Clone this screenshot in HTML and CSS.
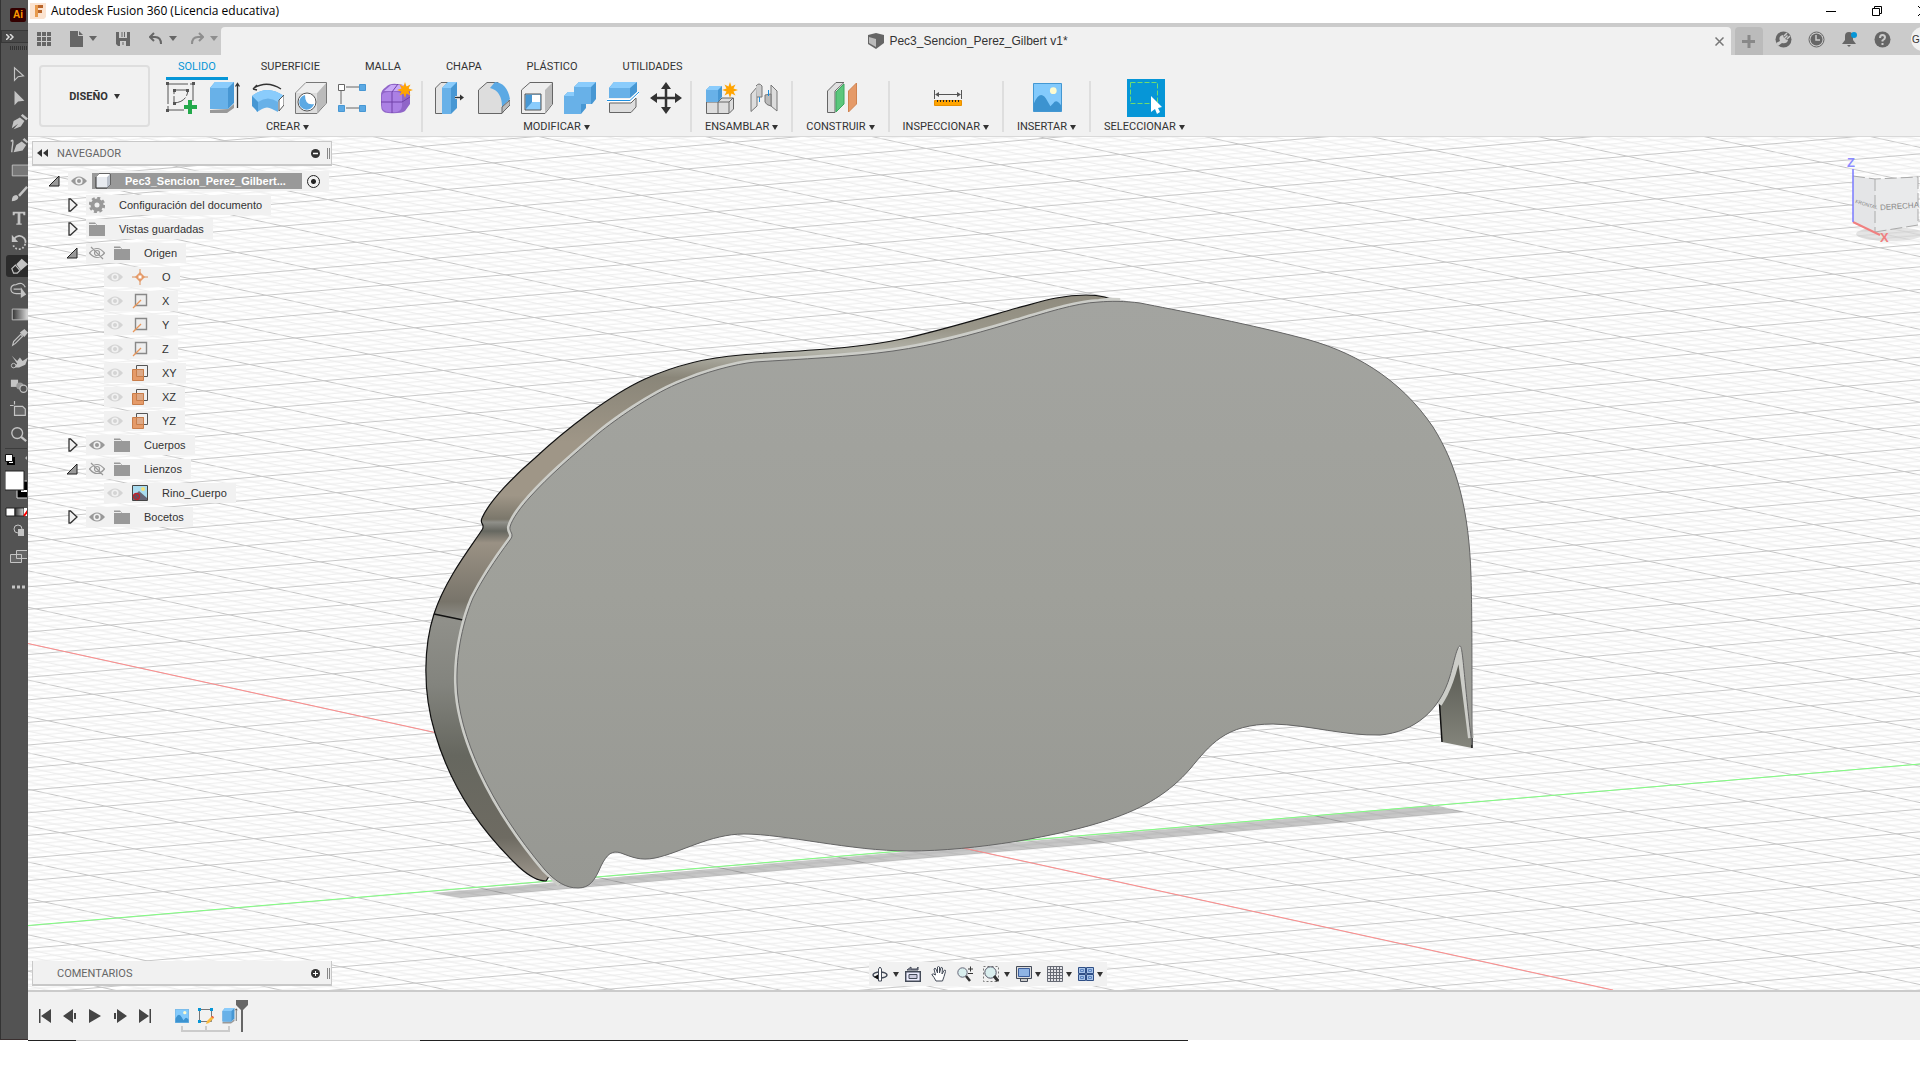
FILE: index.html
```
<!DOCTYPE html>
<html lang="es">

<head>
    <meta charset="UTF-8">
    <meta name="viewport" content="width=device-width, initial-scale=1.0">
    <title>Autodesk Fusion 360 (Licencia educativa)</title>
    <link rel="stylesheet" href="styles.css">
</head>

<body>
    <!-- Shared icons -->
    <svg class="defs" aria-hidden="true">
        <symbol id="eye" viewBox="0 0 16 16">
            <path d="M0 8Q8-1 16 8Q8 17 0 8Z" fill="currentColor" />
            <circle cx="8" cy="8" r="3.6" fill="#f1f1f1" />
            <circle cx="8" cy="8" r="2" fill="currentColor" />
        </symbol>
        <symbol id="eye-off" viewBox="0 0 16 16">
            <path d="M.5 8Q8-1 15.500 8Q8 17 .5 8ZM2 2L14 14" fill="none" stroke="currentColor" stroke-width="1.200" />
            <circle cx="8" cy="8" r="2.500" fill="none" stroke="currentColor" stroke-width="1.200" />
        </symbol>
        <symbol id="folder" viewBox="0 0 16 16">
            <path d="M0 1.500H6L8 4H16V15H0Z" fill="#999" />
            <path d="M0 3.500H7" stroke="#eee" />
        </symbol>
        <symbol id="closed" viewBox="0 0 12 16">
            <path d="M3 2H4.500L11 8L4.500 14H3Z" fill="#f1f1f1" stroke="#333" stroke-width="1.300" />
        </symbol>
        <symbol id="open" viewBox="0 0 12 16">
            <path d="M1 13L11 3V13Z" fill="#999" stroke="#222" />
        </symbol>
        <symbol id="axis" viewBox="0 0 16 16">
            <path d="M3.500 1.500H14.500V12.500H3.500Z" fill="#eee" stroke="#888" stroke-width="1.400" />
            <path d="M1 15L9 7" stroke="#e8965a" stroke-width="1.300" />
        </symbol>
        <symbol id="plane" viewBox="0 0 16 16">
            <path d="M4.500 .5H15.500V11.500H12M4.500 .5V5" fill="none" stroke="#555" />
            <path d="M.5 4.500H11.500V15.500H.5Z" fill="#e59a68" stroke="#c87d4a" />
            <path d="M4.500 4.500H11.500V11.500H4.500Z" fill="#dda987" stroke="#c87d4a" />
        </symbol>
        <symbol id="picture" viewBox="0 0 30 30">
            <path d="M.5 .5H29.500V29.500H.5Z" fill="#83cafc" stroke="#3c93d0" />
            <path d="M1 21Q8 5 15 19L18 24L21 21Q24 16 29 23V29H1Z" fill="#3c93d0" />
            <circle cx="21" cy="8" r="3.500" fill="#fdfbd0" />
        </symbol>
        <symbol id="extrude" viewBox="0 0 32 32">
            <path d="M1 28V31H18L25 26V22L19 27Z" fill="#999" />
            <path d="M1 6L6 0H25V21L19 27H1Z" fill="#4797d3" />
            <path d="M1 6H19V27H1Z" fill="#68b1e8" />
            <path d="M1 6L6 0H25L19 6Z" fill="#8accfc" />
            <path d="M28.500 26V2M26.500 4.500L28.500 1.500L30.500 4.500" fill="none" stroke="#333" stroke-width="1.300" />
        </symbol>
        <symbol id="star" viewBox="0 0 16 16">
            <path d="M8 0L9.500 4.500L13.500 2.500L11.500 6.500L16 8L11.500 9.500L13.500 13.500L9.500 11.500L8 16L6.500 11.500L2.500 13.500L4.500 9.500L0 8L4.500 6.500L2.500 2.500L6.500 4.500Z" fill="#ffa400" />
        </symbol>
    </svg>

    <div class="desktop">
        <!-- Illustrator tool strip behind the window -->
        <aside class="ai-strip">
            <div class="ai-title"><span class="ai-logo">Ai</span></div>
            <div class="ai-expand">
                <svg width="8" height="6" viewBox="0 0 8 6"><path d="M0 0L3 3L0 6M4 0L7 3L4 6" fill="none" stroke="#ddd" stroke-width="1.500" /></svg>
            </div>
            <div class="ai-grip"></div>
            <div class="ai-tools">
                <button aria-label="Selección"><svg viewBox="0 0 20 20"><path d="M5 3V17L9 13L15 12Z" fill="none" stroke="#c4c4c4" stroke-width="1.300" /></svg></button>
                <button aria-label="Selección directa"><svg viewBox="0 0 20 20"><path d="M5 2V18L9 14L16 13Z" fill="#c4c4c4" /></svg></button>
                <button aria-label="Pluma"><svg viewBox="0 0 20 20"><path d="M2 17L4 9L11 5L16 9L12 15L4 18L9 12ZM12 3L14 1L20 6L18 8Z" fill="#c4c4c4" /></svg></button>
                <button aria-label="Curvatura"><svg viewBox="0 0 20 20"><path d="M1 5Q4 1 3 8T2 17" fill="none" stroke="#c4c4c4" stroke-width="1.500" /><path d="M4 17L7 9L13 5L18 9L14 15ZM14 3L16 1L20 5L19 7Z" fill="#c4c4c4" /></svg></button>
                <button aria-label="Rectángulo"><svg viewBox="0 0 20 20"><path d="M2.500 4.500H24V16.500H2.500Z" fill="#777" stroke="#c4c4c4" /></svg></button>
                <button aria-label="Pincel"><svg viewBox="0 0 20 20"><path d="M2 18Q2 11 7 11Q11 13 8 16Q6 18 2 18ZM9 11L18 1L20 3L11 13Z" fill="#c4c4c4" /></svg></button>
                <button aria-label="Texto"><svg viewBox="0 0 20 20"><path d="M3 3H17V7H15L14.500 5H11.500V16H13V17.500H7V16H8.500V5H5.500L5 7H3Z" fill="#c4c4c4" /></svg></button>
                <button aria-label="Rotar"><svg viewBox="0 0 20 20"><path d="M4 7Q10 0 16 6Q18 9 17 11" fill="none" stroke="#c4c4c4" stroke-width="2" /><path d="M2 2V10H9Z" fill="#c4c4c4" /><path d="M17 12Q15 18 10 18T3 12" fill="none" stroke="#c4c4c4" stroke-width="2" stroke-dasharray="2 2" /></svg></button>
                <button class="active" aria-label="Borrador"><svg viewBox="0 0 20 20"><path d="M7 8L13 2L20 8L12 15Z" fill="#c4c4c4" /><path d="M6 9L11 15L8 18H4L2 13Z" fill="none" stroke="#c4c4c4" stroke-width="1.300" /></svg></button>
                <button aria-label="Creador de formas"><svg viewBox="0 0 20 20"><path d="M7 4Q1 4 1 9T7 14H12M7 4Q14 0 17 7M4 9H12" fill="none" stroke="#c4c4c4" stroke-width="1.300" /><path d="M12 7V19L18 15Z" fill="#c4c4c4" /></svg></button>
                <button aria-label="Degradado"><svg viewBox="0 0 20 20"><defs><linearGradient id="ramp"><stop stop-color="#333" /><stop offset="1" stop-color="#ddd" /></linearGradient></defs><path d="M2.500 4.500H20V16.500H2.500Z" fill="url(#ramp)" stroke="#c4c4c4" /></svg></button>
                <button aria-label="Cuentagotas"><svg viewBox="0 0 20 20"><path d="M3 18L4 14L12 6L14 8L6 16Z" fill="none" stroke="#c4c4c4" stroke-width="1.300" /><path d="M11 4L16 9L20 4L16 0Z" fill="#c4c4c4" /></svg></button>
                <button aria-label="Deformación"><svg viewBox="0 0 20 20"><path d="M2 3L8 9L11 5L14 9L20 5L17 13L10 16L3 16L8 12Z" fill="#c4c4c4" /><circle cx="4" cy="14" r="2.500" fill="#535353" stroke="#c4c4c4" /></svg></button>
                <button aria-label="Fusión"><svg viewBox="0 0 20 20"><path d="M1 3H9V11H1Z" fill="#c4c4c4" /><circle cx="11" cy="10" r="4" fill="#999" /><circle cx="15" cy="13" r="4" fill="#535353" stroke="#c4c4c4" stroke-width="1.300" /></svg></button>
                <button aria-label="Mesa de trabajo"><svg viewBox="0 0 20 20"><path d="M0 5H4M5 0V4M5 6H14L17 9V16H5Z" fill="#666" stroke="#c4c4c4" stroke-width="1.300" /></svg></button>
                <button aria-label="Zoom"><svg viewBox="0 0 20 20"><circle cx="8" cy="9" r="6" fill="none" stroke="#c4c4c4" stroke-width="1.500" /><path d="M12 13L18 18" stroke="#c4c4c4" stroke-width="2.500" /></svg></button>
            </div>
            <!-- Fill, stroke and screen mode -->
            <svg class="ai-swatches" width="22" height="160" viewBox="0 0 22 160">
                <path d="M0 1.500H22" stroke="#3c3c3c" />
                <path d="M5 11H9V17H3V13" fill="#fff" stroke="#000" stroke-width="2" />
                <path d="M.5 7.500H7.500V14.500H.5Z" fill="#fff" stroke="#111" />
                <path d="M20 11L22 9V13Z" fill="#bbb" />
                <path d="M12 34H24V51H12Z" fill="#000" stroke="#ddd" /><path d="M16 44H24" stroke="#fff" stroke-width="2" />
                <path d="M0 24H19V43H0Z" fill="#fff" stroke="#222" />
                <path d="M1 61H10V69H1Z" fill="#fff" stroke="#222" /><path d="M10 61H19V69H10Z" fill="url(#ramp)" stroke="#222" /><path d="M19 61H24V69H19Z" fill="#fff" /><path d="M19 69L24 62" stroke="red" stroke-width="2" />
                <circle cx="13" cy="82" r="4" fill="none" stroke="#c4c4c4" /><path d="M13 82H19V89H13Z" fill="#c4c4c4" />
                <path d="M5.500 107.500H16.500V115.500H5.500ZM11.500 103.500H24V111.500H11.500Z" fill="#666" stroke="#c4c4c4" />
                <path d="M7 140H10M12 140H15M17 140H20" stroke="#c4c4c4" stroke-width="3" />
            </svg>
        </aside>

        <main class="window">
            <header class="titlebar">
                <svg class="app-logo" width="16" height="16" viewBox="0 0 16 16">
                    <path d="M0 0H16V14L14 16H0Z" fill="#fbe3d0" />
                    <path d="M5 2H13V5H8V7H12V10H8V14H5Z" fill="#b8642a" /><path d="M5 2H8V14H5Z" fill="#e89a4c" />
                </svg>
                <h1>Autodesk Fusion 360 (Licencia educativa)</h1>
                <div class="window-buttons">
                    <button aria-label="Minimizar"><svg width="10" height="10" viewBox="0 0 10 10"><path d="M0 5.500H10" stroke="#000" /></svg></button>
                    <button aria-label="Restaurar"><svg width="10" height="10" viewBox="0 0 10 10"><path d="M.5 2.500H7.500V9.500H.5ZM2.500 2V.5H9.500V7.500H8" fill="none" stroke="#000" /></svg></button>
                    <button aria-label="Cerrar"><svg width="10" height="10" viewBox="0 0 10 10"><path d="M0 0L10 10M10 0L0 10" stroke="#000" /></svg></button>
                </div>
            </header>

            <div class="tabbar">
                <div class="quick">
                    <button aria-label="Panel de datos"><svg width="14" height="14" viewBox="0 0 14 14"><path d="M0 0H4V4H0ZM5 0H9V4H5ZM10 0H14V4H10ZM0 5H4V9H0ZM5 5H9V9H5ZM10 5H14V9H10ZM0 10H4V14H0ZM5 10H9V14H5ZM10 10H14V14H10Z" fill="#666" /></svg></button>
                    <button aria-label="Archivo"><svg width="13" height="16" viewBox="0 0 13 16"><path d="M0 0H8V5H13V16H0ZM9 0L13 4H9Z" fill="#666" /></svg><i class="caret big"></i></button>
                    <button aria-label="Guardar"><svg width="14" height="14" viewBox="0 0 14 14"><path d="M0 0H14V14H2L0 12Z" fill="#666" /><path d="M3 0H11V6H3ZM4 9H10V14H4Z" fill="#ccc" /><path d="M6 0V5M8.500 0V5M7 10V13" stroke="#666" /></svg></button>
                    <button aria-label="Deshacer"><svg width="14" height="14" viewBox="0 0 14 14"><path d="M1 5H6Q12 5 12 12" fill="none" stroke="#666" stroke-width="2" /><path d="M5 1L1 5L5 9" fill="none" stroke="#666" stroke-width="2" /></svg><i class="caret big"></i></button>
                    <button class="off" aria-label="Rehacer"><svg width="14" height="14" viewBox="0 0 14 14"><path d="M13 5H8Q2 5 2 12M9 1L13 5L9 9" fill="none" stroke="#666" stroke-width="2" /></svg><i class="caret big"></i></button>
                </div>
                <div class="doc-tab">
                    <svg width="16" height="16" viewBox="0 0 16 16"><path d="M0 2L8 0L16 2V10L8 16L0 11Z" fill="#666" /><path d="M1 4L8 6V14L1 10Z" fill="#bbb" /></svg>
                    <span>Pec3_Sencion_Perez_Gilbert v1*</span>
                    <button class="doc-close" aria-label="Cerrar documento"><svg width="9" height="9" viewBox="0 0 9 9"><path d="M.5 .5L8.500 8.500M8.500 .5L.5 8.500" stroke="#777" stroke-width="1.500" /></svg></button>
                </div>
                <button class="new-tab" aria-label="Nuevo diseño"><svg width="14" height="14" viewBox="0 0 14 14"><path d="M7 1V14M0 7.500H13" stroke="#888" stroke-width="3" /></svg></button>
                <div class="status">
                    <button aria-label="Extensiones"><svg width="17" height="17" viewBox="0 0 17 17"><circle cx="8.500" cy="8.500" r="8" fill="#666" /><path d="M1 12L5 10Q3 5 8 4L9 7L12 4L13 5L10 8L13 9Q12 13 7 12L3 15Z" fill="#ccc" /><path d="M9 5L12 2M12 8L15 5" stroke="#ccc" stroke-width="1.500" /></svg></button>
                    <button aria-label="Estado del trabajo"><svg width="17" height="17" viewBox="0 0 17 17"><circle cx="8.500" cy="8.500" r="7.500" fill="none" stroke="#666" /><circle cx="8.500" cy="8.500" r="6" fill="#666" /><path d="M8 4V9H12" fill="none" stroke="#ccc" stroke-width="1.500" /></svg></button>
                    <button aria-label="Notificaciones"><svg width="17" height="17" viewBox="0 0 17 17"><path d="M1 13L4 9V5Q4 1 8 1Q12 1 12 6V9L15 13ZM6 14H10L8 16Z" fill="#666" /><circle cx="13" cy="4" r="3" fill="#0696d7" /></svg></button>
                    <button aria-label="Ayuda"><svg width="17" height="17" viewBox="0 0 17 17"><circle cx="8.500" cy="8.500" r="8" fill="#666" /><path d="M6 7Q6 4 8.500 4T11 6.500Q11 8 8.500 9.500V10.500" fill="none" stroke="#ccc" stroke-width="2" /><path d="M7.500 12H9.500V14H7.500Z" fill="#ccc" /></svg></button>
                </div>
                <button class="avatar">G</button>
            </div>

            <!-- Ribbon -->
            <div class="ribbon">
                <button class="workspace">DISEÑO <i class="caret"></i></button>
                <div class="ribbon-body">
                    <nav class="ribbon-tabs">
                        <button class="active">SOLIDO</button>
                        <button>SUPERFICIE</button>
                        <button>MALLA</button>
                        <button>CHAPA</button>
                        <button>PLÁSTICO</button>
                        <button>UTILIDADES</button>
                    </nav>
                    <div class="groups">
                        <div class="group">
                            <div class="tools">
                                <button aria-label="Crear boceto"><svg viewBox="0 0 32 32"><path d="M2 2H27V20M2 2V28H18M8 8H22Q21 20 8 21Z" fill="none" stroke="#555" stroke-dasharray="20 2" /><path d="M0 0H3V3H0ZM26 0H29V3H26ZM0 27H3V30H0ZM7 7H10V10H7ZM20 7H23V10H20ZM7 20H10V23H7Z" fill="#555" /><path d="M22 18H26V23H31V27H26V32H22V27H18V23H22Z" fill="#23a94b" /></svg></button>
                                <button aria-label="Extruir"><svg><use href="#extrude" /></svg></button>
                                <button aria-label="Revolución"><svg viewBox="0 0 32 32"><path d="M0 14Q15 2 32 14L26 19V30L20 27Q15 24 10 27L5 30L0 20Z" fill="#68b1e8" /><path d="M0 14Q15 2 32 14L26 20Q16 13 6 20Z" fill="#8accfc" /><path d="M0 14L6 20V30L0 24Z" fill="#4797d3" /><path d="M27 18L32 13V23L27 29Z" fill="#fff" stroke="#555" /><path d="M2 6Q15-2 29 7M1 7L5 3M1 7L5 8" fill="none" stroke="#333" stroke-width="1.300" /></svg></button>
                                <button aria-label="Agujero"><svg viewBox="0 0 32 32"><path d="M.5 11L11 .5H31.500V21L22 31.500H.5Z" fill="#ddd" stroke="#777" /><path d="M22 11L31 1V21L22 31Z" fill="#bbb" /><path d="M1 11L11 1H31L22 11Z" fill="#eee" /><circle cx="12" cy="20" r="9" fill="#fff" stroke="#555" /><path d="M10 13A7.500 7.500 0 1 0 19 22Q10 24 10 13Z" fill="#5ba9e4" /></svg></button>
                                <button aria-label="Patrón"><svg viewBox="0 0 32 32"><path d="M8 5H22M3 9V22M8 26H22" stroke="#666" /><path d="M.5 2.500H6.500V8.500H.5Z" fill="#fff" stroke="#666" /><path d="M21.500 2.500H27.500V8.500H21.500ZM.5 23.500H6.500V29.500H.5ZM21.500 23.500H27.500V29.500H21.500Z" fill="#5ba9e4" stroke="#4797d3" /></svg></button>
                                <button aria-label="Crear forma"><svg viewBox="0 0 32 32"><path d="M0 13Q0 8 5 5Q9 1 16 2Q25 2 29 8V22L24 29Q20 32 7 31Q0 31 0 23Z" fill="#9065c8" /><path d="M1 13Q2 10 8 10Q20 9 21 13V24Q20 31 12 30Q1 31 1 24Z" fill="#ab80e4" /><path d="M3 9L10 3H24L20 9Z" fill="#c9a9f7" /><path d="M11 10V31M0 20H21L29 15M11 10L17 2" fill="none" stroke="#7041a8" /><use href="#star" x="16" y="0" width="16" height="16" /></svg></button>
                            </div>
                            <button class="group-label">CREAR <i class="caret"></i></button>
                        </div>
                        <div class="group">
                            <div class="tools">
                                <button aria-label="Pulsar/Tirar"><svg viewBox="0 0 32 32"><path d="M.5 6L6 .5H14V31.500H.5Z" fill="#e4e4e4" stroke="#666" /><path d="M7 6L13 0H22V26L16 32H7Z" fill="#4797d3" /><path d="M7 6H16V32H7Z" fill="#68b1e8" /><path d="M7 6L13 0H22L16 6Z" fill="#8accfc" /><path d="M20 15.500H28" stroke="#fff" stroke-width="3" /><path d="M20 15.500H25" stroke="#333" stroke-width="1.500" /><path d="M25 12.500L29 15.500L25 18.500Z" fill="#333" /></svg></button>
                                <button aria-label="Empalme"><svg viewBox="0 0 32 32"><path d="M.5 8L9 .5H20L31 20V22L24 31.500H.5Z" fill="#ddd" stroke="#666" /><path d="M12 6L17 0Q29 1 32 17L24 25Q24 9 12 6Z" fill="#5ba9e4" /><path d="M24 25L32 18V23L24 31Z" fill="#bbb" stroke="#666" /></svg></button>
                                <button aria-label="Vaciado"><svg viewBox="0 0 32 32"><path d="M.5 8L9 .5H31.500V22L24 31.500H.5Z" fill="#eee" stroke="#666" /><path d="M24 8L31 1V22L24 31Z" fill="#bbb" /><path d="M4 12H20V28H4Z" fill="#8accfc" stroke="#555" /><path d="M5 13H11V20L5 27Z" fill="#4797d3" /><path d="M11 13H19V20H11Z" fill="#fff" /></svg></button>
                                <button aria-label="Combinar"><svg viewBox="0 0 32 32"><path d="M0 14L4 10H10V5L15 0H32V17L28 22H22V26L17 32H0Z" fill="#4797d3" /><path d="M0 14H10V5H27V22H17V32H0Z" fill="#68b1e8" /><path d="M10 5L15 0H32L27 5ZM0 14L4 10H10V14Z" fill="#8accfc" /></svg></button>
                                <button aria-label="Dividir"><svg viewBox="0 0 32 32"><path d="M2.500 21H24L29 16V25L24 30.500H2.500Z" fill="#ddd" stroke="#666" /><path d="M2 6L7 0H30V10L23 16H2Z" fill="#4797d3" /><path d="M2 6H23V16H2Z" fill="#68b1e8" /><path d="M2 6L7 0H30L23 6Z" fill="#8accfc" /><path d="M0 18.500H23L32 10" fill="none" stroke="#fff" stroke-width="3" /><path d="M0 18.500H23L32 10" fill="none" stroke="#1c8fe0" /></svg></button>
                                <button aria-label="Desplazar"><svg viewBox="0 0 32 32"><path d="M16 4V28M4 16H28" stroke="#333" stroke-width="2.500" /><path d="M16 0L21 7H11ZM16 32L11 25H21ZM0 16L7 11V21ZM32 16L25 21V11Z" fill="#333" /></svg></button>
                            </div>
                            <button class="group-label">MODIFICAR <i class="caret"></i></button>
                        </div>
                        <div class="group">
                            <div class="tools">
                                <button aria-label="Nuevo componente"><svg viewBox="0 0 32 32"><path d="M.5 20H12L16 16H27.500V27L23 31.500H.5Z" fill="#ddd" stroke="#666" /><path d="M12 20V31M12 20H23V31M23 20L27 16" fill="none" stroke="#666" /><path d="M0 8L4 4H16V15L12 20H0Z" fill="#4797d3" /><path d="M0 8H12V20H0Z" fill="#68b1e8" /><path d="M0 8L4 4H16L12 8Z" fill="#8accfc" /><use href="#star" x="16" y="0" width="16" height="16" /></svg></button>
                                <button aria-label="Unión"><svg viewBox="0 0 32 32"><path d="M2 12L8 5V24L2 29.500ZM22 3L28 9V29L22 24Z" fill="#ddd" stroke="#777" /><path d="M7 4Q10 0 13 4V15H8" fill="#ccc" stroke="#777" /><path d="M16 13L22 12V24Q17 23 16 20Z" fill="#bbb" stroke="#777" /><path d="M10.500 15V20M19.500 8V14" stroke="#1c8fe0" /></svg></button>
                            </div>
                            <button class="group-label">ENSAMBLAR <i class="caret"></i></button>
                        </div>
                        <div class="group">
                            <div class="tools">
                                <button aria-label="Plano desfasado"><svg viewBox="0 0 32 32"><path d="M1.500 9L10 .5H18L9 9V30.500H1.500Z" fill="#e0e0e0" stroke="#666" /><path d="M10 10L18 2V22L10 30Z" fill="#5bc77c" stroke="#3ba85e" /><path d="M22.500 9L30.500 1V22L22.500 30Z" fill="#e59a68" stroke="#d08350" /></svg></button>
                            </div>
                            <button class="group-label">CONSTRUIR <i class="caret"></i></button>
                        </div>
                        <div class="group">
                            <div class="tools">
                                <button aria-label="Medir"><svg viewBox="0 0 32 32"><path d="M2.500 8V17M29.500 8V17M4 12.500H28" stroke="#555" /><path d="M3 12.500L7 10V15ZM29 12.500L25 10V15Z" fill="#555" /><path d="M2.500 18.500H29.500V23.500H2.500Z" fill="#ffa400" stroke="#e89000" /><path d="M5.500 18V20M8.500 18V20M11.500 18V20M14.500 18V20M17.500 18V20M20.500 18V20M23.500 18V20M26.500 18V20" stroke="#222" /></svg></button>
                            </div>
                            <button class="group-label">INSPECCIONAR <i class="caret"></i></button>
                        </div>
                        <div class="group">
                            <div class="tools">
                                <button aria-label="Insertar lienzo"><svg viewBox="0 0 32 32"><use href="#picture" x="1" y="1" width="29" height="29" /></svg></button>
                            </div>
                            <button class="group-label">INSERTAR <i class="caret"></i></button>
                        </div>
                        <div class="group">
                            <div class="tools">
                                <button class="picked" aria-label="Seleccionar"><svg viewBox="0 0 38 38"><path d="M3.500 3.500H30.500V24.500H3.500Z" fill="none" stroke="#6fdc6f" stroke-dasharray="5 2" /><path d="M24 17V33L28 30L30 35L33 33L31 29L35 28Z" fill="#fff" /></svg></button>
                            </div>
                            <button class="group-label">SELECCIONAR <i class="caret"></i></button>
                        </div>
                    </div>
                </div>
            </div>

            <!-- Canvas -->
            <section class="viewport">
                <svg class="scene" viewBox="28 137 1892 853" preserveAspectRatio="xMidYMid slice">
                    <defs>
                        <pattern id="grid-x" patternUnits="userSpaceOnUse" width="2400" height="36.400" patternTransform="matrix(1 .2187 0 1 0 637)">
                            <path d="M0 7.780H2400M0 15.060H2400M0 22.340H2400M0 29.620H2400" stroke="#e9e9e9" />
                            <path d="M0 .5H2400" stroke="#c4c4c4" />
                        </pattern>
                        <pattern id="grid-y" patternUnits="userSpaceOnUse" width="2400" height="22.600" patternTransform="matrix(1 -.0855 0 1 0 927.700)">
                            <path d="M0 5.020H2400M0 9.540H2400M0 14.060H2400M0 18.580H2400" stroke="#ececec" />
                            <path d="M0 .5H2400" stroke="#c8c8c8" />
                        </pattern>
                        <linearGradient id="side" gradientUnits="userSpaceOnUse" x1="0" y1="295" x2="0" y2="885">
                            <stop offset="0" stop-color="#8f8b7e" />
                            <stop offset=".06" stop-color="#9a978a" />
                            <stop offset=".095" stop-color="#b4b4aa" />
                            <stop offset=".14" stop-color="#8a8679" />
                            <stop offset=".25" stop-color="#9f9687" />
                            <stop offset=".34" stop-color="#9f9687" />
                            <stop offset=".38" stop-color="#7b776b" />
                            <stop offset=".385" stop-color="#90908a" />
                            <stop offset=".4" stop-color="#666760" />
                            <stop offset=".42" stop-color="#9a9184" />
                            <stop offset=".52" stop-color="#78746a" />
                            <stop offset=".55" stop-color="#90908a" />
                            <stop offset=".66" stop-color="#83847e" />
                            <stop offset=".78" stop-color="#66675f" />
                            <stop offset=".92" stop-color="#6e6b62" />
                            <stop offset="1" stop-color="#a39c92" />
                        </linearGradient>
                        <linearGradient id="face" x1="0" y1="0" x2="0" y2="1">
                            <stop offset="0" stop-color="#a3a4a0" />
                            <stop offset=".5" stop-color="#9fa09a" />
                            <stop offset="1" stop-color="#979893" />
                        </linearGradient>
                        <linearGradient id="leg" x1="0" y1="0" x2="0" y2="1">
                            <stop offset="0" stop-color="#52534c" />
                            <stop offset="1" stop-color="#84857c" />
                        </linearGradient>
                    </defs>
                    <rect x="28" y="137" width="1892" height="853" fill="#fff" />
                    <rect x="28" y="137" width="1892" height="853" fill="url(#grid-x)" />
                    <rect x="28" y="137" width="1892" height="853" fill="url(#grid-y)" />
                    <path d="M432 893L1433 806L1465 812L461 898Z" fill="#000" fill-opacity=".22" />
                    <path d="M28 643.500L1613 990" stroke="#ff8c8c" />
                    <path d="M28 925.500L1920 764" stroke="#80ff80" />
                    <path d="M1118 303C1110 297 1098 295 1086 295C1060 295 1040 302 1017 308C975 320 935 332 902 339C850 350 800 350 741 355C700 358 665 370 645 379C610 395 565 430 535 458C515 475 490 500 482 518C479 524 486 524 482 530C470 548 445 580 434 614C424 645 422 690 435 733C450 785 480 830 519 867C530 877 538 881 546 881L600 800Z" fill="url(#side)" stroke="#111" stroke-width="1.200" stroke-linejoin="round" />
                    <path d="M434 614L463 620" stroke="#111" stroke-width="1.300" />
                    <path d="M1439 700L1442 742L1472 748V735L1460 648Z" fill="url(#leg)" />
                    <path d="M1439.500 703L1442 742M1472 738V748" stroke="#111" stroke-width="1.500" />
                    <path id="body" d="M1099 302C1075 303 1045 313 1008 324S935 345 893 351S800 359 755 362C735 364 705 372 677 384S615 420 599 433C570 458 550 475 530 497C521 507 512 519 510 527C509 532 515 534 510 540C495 560 482 580 473 598C467 612 456 645 457 683C458 735 490 805 545 870C556 882 566 888 578 888C590 888 595 880 601 866C607 854 612 850 621 853C632 857 640 861 655 858C680 853 710 834 744 834C785 834 850 851 909 851C975 851 1060 836 1108 820C1145 808 1170 792 1190 769C1210 745 1225 724 1273 724C1310 725 1345 736 1380 735C1415 732 1440 710 1450 676C1454 662 1457 646 1460 646C1463 646 1464 680 1472 745C1472 650 1472 610 1471 576C1469 510 1457 465 1433 427C1400 378 1352 350 1298 337C1240 322 1175 310 1140 303C1125 301 1110 301 1099 302Z" fill="url(#face)" />
                    <path d="M1120 301Q1110 300 1099 302C1075 303 1045 313 1008 324S935 345 893 351S800 359 755 362C735 364 705 372 677 384S615 420 599 433C570 458 550 475 530 497C521 507 512 519 510 527C509 532 515 534 510 540C495 560 482 580 473 598C467 612 456 645 457 683C458 735 490 805 545 870L560 884M1439 704Q1452 685 1459 648Q1462 665 1471 738" fill="none" stroke="#cccdc8" stroke-width="6" />
                    <use href="#body" class="body-edge" />
                </svg>

                <svg class="viewcube" width="80" height="100" viewBox="0 0 80 100">
                    <ellipse cx="50" cy="84" rx="34" ry="7" fill="#000" fill-opacity=".1" />
                    <path d="M13 26L35 29V82L13 72Z" fill="#e4e5e7" />
                    <path d="M35 29L78 27V75L35 82Z" fill="#e9eaeb" />
                    <path d="M13 26L35 29L78 27M35 29V82M78 27V75L35 82" fill="none" stroke="#aaa" stroke-dasharray="12 4" />
                    <path d="M13 72L40 85" stroke="#f08080" stroke-width="2" />
                    <path d="M13 19V72" stroke="#7a7aff" stroke-width="1.500" />
                    <text x="7" y="17" class="axis-z">Z</text>
                    <text x="40" y="92" class="axis-x">X</text>
                    <text x="40" y="59" class="cube-text" transform="rotate(-4 57 57)">DERECHA</text>
                    <text x="15" y="53" class="cube-text small" transform="rotate(16 15 53)">FRONTAL</text>
                </svg>

                <!-- Browser tree -->
                <div class="browser">
                    <div class="panel-head">
                        <svg width="11" height="8" viewBox="0 0 11 8"><path d="M5 0V8L0 4ZM11 0V8L6 4Z" fill="#333" /></svg>
                        <h2>NAVEGADOR</h2>
                        <button class="round" aria-label="Contraer"><svg width="9" height="9" viewBox="0 0 9 9"><circle cx="4.500" cy="4.500" r="4.500" fill="#333" /><path d="M2 4.500H7" stroke="#fff" stroke-width="1.500" /></svg></button>
                        <i class="grip"></i>
                    </div>
                    <ul class="tree">
                        <li><svg class="toggle"><use href="#open" /></svg>
                            <div class="node root"><svg class="dim"><use href="#eye" /></svg>
                                <span class="selected"><svg viewBox="0 0 16 16"><path d="M1 4L4 1H15V12L12 15H1Z" fill="#e8ebf0" stroke="#333" /><path d="M12 4L15 1V12L12 15Z" fill="#bcc2cc" /><path d="M1 4L4 1H15L12 4Z" fill="#fff" /></svg><b>Pec3_Sencion_Perez_Gilbert...</b></span>
                                <input type="radio" name="active" aria-label="Activar componente" checked>
                            </div>
                        </li>
                        <li class="l1"><svg class="toggle"><use href="#closed" /></svg>
                            <div class="node"><svg viewBox="0 0 16 16"><circle cx="8" cy="8" r="4.500" fill="none" stroke="#999" stroke-width="4" /><circle cx="8" cy="8" r="7" fill="none" stroke="#999" stroke-width="2.500" stroke-dasharray="3 2.500" /></svg><span>Configuración del documento</span></div>
                        </li>
                        <li class="l1"><svg class="toggle"><use href="#closed" /></svg>
                            <div class="node"><svg><use href="#folder" /></svg><span>Vistas guardadas</span></div>
                        </li>
                        <li class="l1"><svg class="toggle"><use href="#open" /></svg>
                            <div class="node"><svg class="dim"><use href="#eye-off" /></svg><svg><use href="#folder" /></svg><span>Origen</span></div>
                        </li>
                        <li class="l2">
                            <div class="node"><svg class="faint"><use href="#eye" /></svg><svg viewBox="0 0 16 16"><path d="M8 0V16M0 8H16" stroke="#d9905c" /><path d="M8 3L13 8L8 13L3 8Z" fill="#e59a68" /><path d="M6.500 6.500H9.500V9.500H6.500Z" fill="#fff" /></svg><span>O</span></div>
                        </li>
                        <li class="l2">
                            <div class="node"><svg class="faint"><use href="#eye" /></svg><svg><use href="#axis" /></svg><span>X</span></div>
                        </li>
                        <li class="l2">
                            <div class="node"><svg class="faint"><use href="#eye" /></svg><svg><use href="#axis" /></svg><span>Y</span></div>
                        </li>
                        <li class="l2">
                            <div class="node"><svg class="faint"><use href="#eye" /></svg><svg><use href="#axis" /></svg><span>Z</span></div>
                        </li>
                        <li class="l2">
                            <div class="node"><svg class="faint"><use href="#eye" /></svg><svg><use href="#plane" /></svg><span>XY</span></div>
                        </li>
                        <li class="l2">
                            <div class="node"><svg class="faint"><use href="#eye" /></svg><svg><use href="#plane" /></svg><span>XZ</span></div>
                        </li>
                        <li class="l2">
                            <div class="node"><svg class="faint"><use href="#eye" /></svg><svg><use href="#plane" /></svg><span>YZ</span></div>
                        </li>
                        <li class="l1"><svg class="toggle"><use href="#closed" /></svg>
                            <div class="node"><svg class="dim"><use href="#eye" /></svg><svg><use href="#folder" /></svg><span>Cuerpos</span></div>
                        </li>
                        <li class="l1"><svg class="toggle"><use href="#open" /></svg>
                            <div class="node"><svg class="dim"><use href="#eye-off" /></svg><svg><use href="#folder" /></svg><span>Lienzos</span></div>
                        </li>
                        <li class="l2">
                            <div class="node"><svg class="faint"><use href="#eye" /></svg><svg viewBox="0 0 16 16"><path d="M.5 .5H15.500V15.500H.5Z" fill="#a9dcf0" stroke="#444" /><path d="M1 12L7 6L15 13V15H1Z" fill="#667" /><circle cx="11" cy="4" r="2" fill="#f5e27a" /><circle cx="4.500" cy="11.500" r="3" fill="#556" stroke="#c0222c" stroke-width="1.300" /><path d="M2.500 9.500L6.500 13.500" stroke="#c0222c" /></svg><span>Rino_Cuerpo</span></div>
                        </li>
                        <li class="l1"><svg class="toggle"><use href="#closed" /></svg>
                            <div class="node"><svg class="dim"><use href="#eye" /></svg><svg><use href="#folder" /></svg><span>Bocetos</span></div>
                        </li>
                    </ul>
                </div>

                <div class="comments panel-head">
                    <h2>COMENTARIOS</h2>
                    <button class="round" aria-label="Añadir comentario"><svg width="9" height="9" viewBox="0 0 9 9"><circle cx="4.500" cy="4.500" r="4.500" fill="#333" /><path d="M2 4.500H7M4.500 2V7" stroke="#fff" /></svg></button>
                    <i class="grip"></i>
                </div>

                <!-- Navigation bar -->
                <div class="navbar">
                    <button aria-label="Órbita"><svg viewBox="0 0 16 16"><ellipse cx="8" cy="9" rx="7" ry="3" fill="none" stroke="#444b58" stroke-width="1.500" /><path d="M6.500 15V3L8 1L9.500 3V15Z" fill="#fff" stroke="#444b58" /><path d="M2 11L6 8.500V13.500Z" fill="#111" /></svg><i class="caret"></i></button>
                    <button class="plain" aria-label="Mirar a"><svg viewBox="0 0 16 16"><path d="M.7 5.700H15.300V15.300H.7Z" fill="#eef" stroke="#444b58" stroke-width="1.500" /><path d="M4 8.500H12V12.500H4Z" fill="#ccd" stroke="#444b58" /><path d="M2 4L6 1V3H12L13 1V4Z" fill="#99a" stroke="#444b58" /></svg></button>
                    <button class="plain" aria-label="Encuadre"><svg viewBox="0 0 16 16"><path d="M5 15Q3 11 .8 8.500Q2 7 4.500 9L3 3Q4 1.500 5 3L6.500 7V1Q7.500 0 8.500 1V7L10 1.500Q11 1 11.500 2L11 8L13.500 4Q15 4 14.500 5.500Q13 11 11.500 15Z" fill="#fff" stroke="#444b58" /></svg></button>
                    <button class="plain" aria-label="Zoom"><svg viewBox="0 0 16 16"><circle cx="5.500" cy="6.500" r="4.700" fill="#d9eeee" stroke="#667" /><path d="M9 10L13 15" stroke="#333" stroke-width="2.500" /><path d="M11 3H16M13.500 .5V5.500M11 7.500H16" stroke="#333" /></svg></button>
                    <button aria-label="Zoom de ventana"><svg viewBox="0 0 16 16"><path d="M.5 .5H15.500V15.500H.5Z" fill="none" stroke="#777" stroke-dasharray="2 2" /><circle cx="7.500" cy="6.500" r="5.700" fill="#d9eeee" stroke="#556" /><path d="M11 10L15 15" stroke="#333" stroke-width="3" /></svg><i class="caret"></i></button>
                    <button class="tight" aria-label="Visualización"><svg viewBox="0 0 16 16"><path d="M.5 .5H15.500V12.500H.5Z" fill="#ddd" stroke="#444b58" /><path d="M2.500 2.500H13.500V10.500H2.500Z" fill="#8fb4e4" stroke="#3c5e9c" /><path d="M4.500 13V15.500H11.500V13" fill="#ccc" stroke="#444b58" /></svg><i class="caret"></i></button>
                    <button class="tight" aria-label="Rejilla"><svg viewBox="0 0 16 16"><path d="M.5 .5H15.500V15.500H.5ZM3.500 0V16M6.500 0V16M9.500 0V16M12.500 0V16M0 3.500H16M0 6.500H16M0 9.500H16M0 12.500H16" fill="#e4e4e8" stroke="#666a74" /></svg><i class="caret"></i></button>
                    <button class="tight" aria-label="Ventanas"><svg viewBox="0 0 16 16"><path d="M.5 1.500H7.500V7.500H.5ZM8.500 1.500H15.500V7.500H8.500ZM.5 8.500H7.500V14.500H.5ZM8.500 8.500H15.500V14.500H8.500Z" fill="#a9c4e8" stroke="#2f4f86" /><path d="M2.500 3.500H5.500V5.500H2.500ZM10.500 3.500H13.500V5.500H10.500ZM2.500 10.500H5.500V12.500H2.500ZM10.500 10.500H13.500V12.500H10.500Z" fill="none" stroke="#5c84c0" /></svg><i class="caret"></i></button>
                </div>
            </section>

            <!-- Timeline -->
            <footer class="timeline">
                <div class="player">
                    <button aria-label="Inicio"><svg viewBox="0 0 14 14"><path d="M1 0H2.500V14H1ZM13 0V14L3 7Z" /></svg></button>
                    <button aria-label="Atrás"><svg viewBox="0 0 14 14"><path d="M10 0V14L0 7ZM11 4H13V10H11Z" /></svg></button>
                    <button aria-label="Reproducir"><svg viewBox="0 0 14 14"><path d="M1 0L13 7L1 14Z" /></svg></button>
                    <button aria-label="Adelante"><svg viewBox="0 0 14 14"><path d="M4 0V14L14 7ZM1 4H3V10H1Z" /></svg></button>
                    <button aria-label="Fin"><svg viewBox="0 0 14 14"><path d="M1 0L11 7L1 14ZM11.500 0H13V14H11.500Z" /></svg></button>
                </div>
                <div class="features">
                    <button aria-label="Lienzo"><svg viewBox="0 0 16 16"><use href="#picture" x="1" y="1" width="14" height="14" /></svg></button>
                    <button aria-label="Boceto"><svg viewBox="0 0 16 16"><path d="M1.500 1.500H13.500V13.500H1.500Z" fill="none" stroke="#777" /><path d="M0 0H3V3H0ZM12 0H15V3H12ZM0 12H3V15H0Z" fill="#0696d7" /><path d="M8 16L9 13L14 8L16 10L11 15Z" fill="#f9b93c" /><path d="M13 9L15 8L16 10Z" fill="#e33" /></svg></button>
                    <button aria-label="Extrusión"><svg viewBox="0 0 32 32"><use href="#extrude" width="32" height="32" /></svg></button>
                    <svg class="marker" width="12" height="32" viewBox="0 0 12 32"><path d="M0 0H12V5L7 10V32H5V10L0 5Z" fill="#666" /></svg>
                    <div class="bracket"></div>
                </div>
            </footer>
        </main>
    </div>
    <div class="taskbar-edge"></div>
</body>

</html>
```

FILE: styles.css
```
* {
    box-sizing: border-box;
}

body {
    margin: 0;
    height: 100vh;
    display: flex;
    flex-direction: column;
    background-color: #fff;
    font-family: "Liberation Sans", Arial, sans-serif;
    font-size: 11px;
    color: #333;
    overflow: hidden;
}

button {
    background: none;
    border: none;
    padding: 0;
    font: inherit;
    color: inherit;
    display: flex;
    align-items: center;
    cursor: pointer;
}

svg {
    display: block;
    flex: none;
}

h1,
h2 {
    margin: 0;
    font-weight: normal;
}

.defs {
    position: absolute;
    width: 0;
    height: 0;
}

.caret {
    border: 4px solid transparent;
    border-top: 5px solid #333;
    border-bottom: 0;
    border-left-width: 3px;
    border-right-width: 3px;
}

.caret.big {
    border-top-color: #666;
    border-left-width: 4px;
    border-right-width: 4px;
}

.desktop {
    flex: 1;
    min-height: 0;
    display: flex;
}

/* Illustrator strip */
.ai-strip {
    width: 28px;
    background-color: #535353;
    border-left: 1px solid #333;
    border-bottom: 1px solid #3a2f2f;
    overflow: hidden;
    display: flex;
    flex-direction: column;
}

.ai-title {
    height: 30px;
    padding: 8px 0 0 9px;
}

.ai-logo {
    display: block;
    width: 16px;
    height: 14px;
    border-radius: 2px;
    background-color: #330000;
    color: #ff9a00;
    font-size: 10px;
    line-height: 14px;
    font-weight: bold;
    text-align: center;
}

.ai-expand {
    height: 13px;
    padding: 3px 4px;
    background-color: #484848;
    border: 1px solid #383838;
    border-right: 0;
}

.ai-grip {
    height: 4px;
    margin: 3px 0 13px 9px;
    background: repeating-linear-gradient(90deg, #333 0 1px, transparent 1px 2px);
}

.ai-tools button {
    width: 28px;
    height: 22px;
    padding-left: 4px;
    margin: 0 0 2px 5px;
}

.ai-tools svg {
    width: 18px;
    height: 18px;
}

.ai-tools .active {
    background-color: #2b2b2b;
    border-radius: 3px;
}

.ai-swatches {
    margin: 0 0 0 4px;
}

/* Window */
.window {
    flex: 1;
    min-width: 0;
    display: flex;
    flex-direction: column;
    overflow: hidden;
}

.titlebar {
    height: 23px;
    display: flex;
    align-items: center;
    padding: 0 0 2px 2px;
}

.titlebar h1 {
    margin-left: 5px;
    font: 12px "Open Sans", "Noto Sans", sans-serif;
    color: #000;
}

.window-buttons {
    margin: 0 -8px 0 auto;
    display: flex;
    gap: 36px;
}

.tabbar {
    height: 32px;
    padding-top: 4px;
    background-color: #cbcbcb;
    display: flex;
}

.quick {
    width: 193px;
    padding: 0 0 5px 9px;
    display: flex;
    gap: 19px;
    align-items: center;
}

.quick button {
    gap: 6px;
}

.quick .off {
    margin-left: -6px;
    opacity: .6;
}

.doc-tab {
    flex: 1;
    display: flex;
    align-items: center;
    justify-content: center;
    gap: 5px;
    padding-right: 16px;
    position: relative;
    background-color: #f1f1f1;
    border-radius: 4px 4px 0 0;
    font-size: 12px;
}

.doc-close {
    position: absolute;
    right: 7px;
}

.new-tab {
    width: 28px;
    margin-left: 4px;
    justify-content: center;
    background-color: #bbb;
    border-radius: 4px 4px 0 0;
}

.status {
    display: flex;
    gap: 16px;
    padding: 0 20px 4px 12px;
}

.avatar {
    width: 28px;
    height: 24px;
    margin-right: -19px;
    padding-left: 1px;
    border-radius: 12px;
    background-color: #f1f1f1;
    font-size: 10px;
}

/* Ribbon */
.ribbon {
    height: 82px;
    display: flex;
    background-color: #f1f1f1;
    border-bottom: 1px solid #d9d9d9;
    font-family: Roboto, sans-serif;
}

.workspace {
    width: 111px;
    height: 62px;
    margin: 10px 4px 0 11px;
    border: 2px solid #dedede;
    border-radius: 4px;
    justify-content: center;
    gap: 6px;
    font-weight: bold;
}

.ribbon-body {
    flex: 1;
}

.ribbon-tabs {
    display: flex;
    gap: 21px;
    padding-left: 12px;
}

.ribbon-tabs button {
    height: 25px;
    padding: 0 12px;
    border-bottom: 3px solid transparent;
}

.ribbon-tabs .active {
    color: #0696d7;
    border-color: #0696d7;
}

.groups {
    display: flex;
    margin-top: 1px;
}

.group {
    height: 51px;
    padding: 0 8px 0 12px;
    display: flex;
    flex-direction: column;
    align-items: center;
    border-right: 2px solid #dedede;
}

.group:last-child {
    border: 0;
}

.tools {
    flex: none;
    height: 34px;
    display: flex;
    align-items: center;
    gap: 11px;
}

.tools svg {
    width: 32px;
    height: 32px;
}

.tools .picked svg {
    width: 38px;
    height: 38px;
    background-color: #0696d7;
}

.group-label {
    flex: none;
    margin-top: 4px;
    padding: 0 5px 0 1px;
    gap: 3px;
    line-height: 16px;
}

/* Viewport */
.viewport {
    flex: 1;
    min-height: 0;
    position: relative;
    overflow: hidden;
}

.scene {
    width: 100%;
    height: 100%;
}

.body-edge {
    stroke: #666;
    stroke-width: 1;
}

.viewcube {
    position: absolute;
    top: 13px;
    right: 0;
}

.axis-z {
    font-size: 13px;
    font-weight: bold;
    fill: #8c8cff;
}

.axis-x {
    font-size: 13px;
    font-weight: bold;
    fill: #f08080;
}

.cube-text {
    font-size: 8px;
    fill: #888;
}

.cube-text.small {
    font-size: 5px;
}

.panel-head {
    width: 300px;
    height: 25px;
    display: flex;
    align-items: center;
    padding: 0 1px 0 4px;
    background-color: #f1f1f1;
    border: 1px solid #c8c8c8;
    border-bottom-width: 2px;
}

.panel-head h2 {
    margin-left: 9px;
    font: 11px Roboto, sans-serif;
    color: #666;
}

.panel-head .round {
    margin-left: auto;
}

.grip {
    width: 3px;
    height: 11px;
    margin-left: 7px;
    border: solid #888;
    border-width: 0 1px;
}

.browser {
    position: absolute;
    left: 4px;
    top: 4px;
}

.comments {
    position: absolute;
    left: 4px;
    bottom: 4px;
    padding-top: 2px;
    border-top: 0;
}

.comments h2 {
    margin-left: 20px;
}

.tree {
    list-style: none;
    margin: 3px 0 0;
    padding: 0;
}

.tree li {
    height: 24px;
    padding-left: 16px;
    display: flex;
    align-items: center;
}

.tree .l1 {
    padding-left: 34px;
}

.tree .l2 {
    padding-left: 72px;
}

.toggle {
    width: 12px;
    height: 16px;
    margin-right: 8px;
}

.node {
    height: 20px;
    padding: 0 9px 0 3px;
    display: flex;
    align-items: center;
    gap: 9px;
    background-color: #f1f1f1;
}

.node svg {
    width: 16px;
    height: 16px;
}

.node > span:last-child {
    margin-left: 5px;
}

.node .dim {
    color: #999;
}

.node .faint {
    color: #d4d4d4;
}

.selected {
    height: 16px;
    width: 210px;
    padding-left: 3px;
    display: flex;
    align-items: center;
    gap: 14px;
    background-color: #999;
    color: #fff;
}

.node.root {
    gap: 5px;
}

.root input {
    appearance: none;
    width: 13px;
    height: 13px;
    margin: 0;
    border: 1px solid #222;
    border-radius: 50%;
    background: radial-gradient(#222 2px, transparent 3px);
}

.navbar {
    position: absolute;
    left: 841px;
    bottom: 4px;
    height: 24px;
    padding: 0 4px 0 3px;
    display: flex;
    align-items: center;
    gap: 6px;
    background-color: #f1f1f1;
}

.navbar svg {
    width: 16px;
    height: 16px;
}

.navbar button {
    gap: 5px;
}

.navbar .tight {
    gap: 3px;
}

.navbar .plain {
    margin-right: 4px;
}

/* Timeline */
.timeline {
    height: 50px;
    display: flex;
    align-items: flex-start;
    background-color: #f1f1f1;
    border-top: 2px solid #cbcbcb;
}

.player {
    display: flex;
    gap: 11px;
    padding: 17px 0 0 10px;
}

.player svg {
    width: 14px;
    height: 14px;
    fill: #444;
}

.features {
    display: grid;
    grid-template-columns: 16px 16px 16px 12px;
    grid-template-rows: 24px 8px;
    align-items: end;
    column-gap: 8px;
    margin: 8px 0 0 22px;
}

.features button svg {
    width: 16px;
    height: 16px;
}

.marker {
    margin-left: -10px;
    grid-row: 1 / 3;
    grid-column: 4;
}

.bracket {
    grid-column: 1 / 4;
    grid-row: 2;
    width: 49px;
    height: 6px;
    margin-left: 7px;
    border: 2px solid #cbcbcb;
    border-top: 0;
    background: linear-gradient(#cbcbcb, #cbcbcb) center / 2px 100% no-repeat;
}

.taskbar-edge {
    height: 40px;
    margin-left: 28px;
    background: linear-gradient(90deg, #222 48px, #cbcbcb 48px 392px, #222 392px 1160px, transparent 1160px) top / 100% 1px no-repeat;
}
```
